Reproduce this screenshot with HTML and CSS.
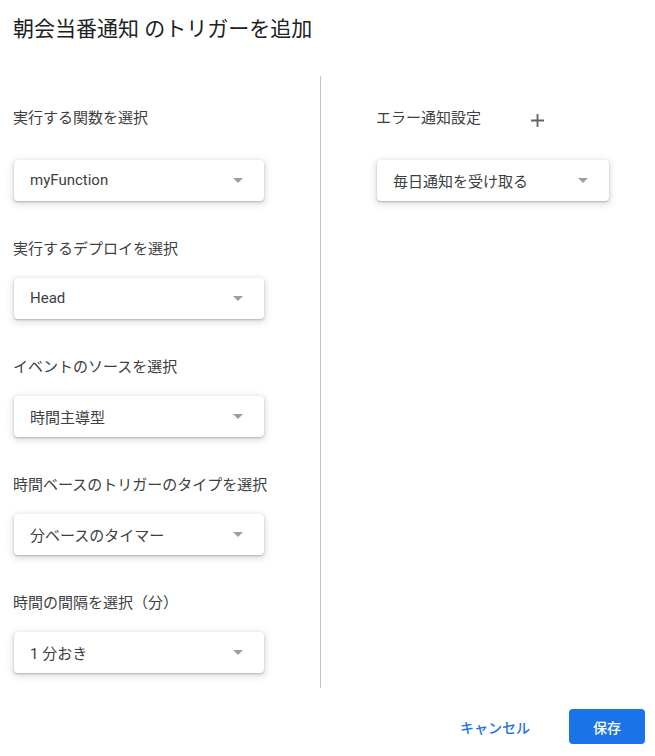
FILE: index.html
```
<!DOCTYPE html>
<html lang="ja">
<head>
<meta charset="utf-8">
<title>トリガーを追加</title>
<link rel="stylesheet" href="styles.css">
</head>
<body>
<div class="dialog">
  <h1 class="title">朝会当番通知 のトリガーを追加</h1>
  <div class="columns">
    <div class="col col-left">
      <div class="field field-first">
        <div class="label">実行する関数を選択</div>
        <div class="select"><span>myFunction</span><i class="arrow"></i></div>
      </div>
      <div class="field">
        <div class="label">実行するデプロイを選択</div>
        <div class="select"><span>Head</span><i class="arrow"></i></div>
      </div>
      <div class="field">
        <div class="label">イベントのソースを選択</div>
        <div class="select"><span>時間主導型</span><i class="arrow"></i></div>
      </div>
      <div class="field">
        <div class="label">時間ベースのトリガーのタイプを選択</div>
        <div class="select"><span>分ベースのタイマー</span><i class="arrow"></i></div>
      </div>
      <div class="field">
        <div class="label">時間の間隔を選択（分）</div>
        <div class="select"><span>1 分おき</span><i class="arrow"></i></div>
      </div>
    </div>
    <div class="col col-right">
      <div class="field field-first">
        <div class="label-row">
          <div class="label">エラー通知設定</div>
          <svg class="plus" width="13" height="13" viewBox="0 0 13 13"><path d="M6.5 0V13M0 6.5H13" stroke="#5f6368" stroke-width="1.8" fill="none"/></svg>
        </div>
        <div class="select select-narrow"><span>毎日通知を受け取る</span><i class="arrow"></i></div>
      </div>
    </div>
  </div>
  <div class="footer">
    <button class="btn btn-text">キャンセル</button>
    <button class="btn btn-primary">保存</button>
  </div>
</div>
</body>
</html>
```
FILE: styles.css
```
html, body {
  margin: 0;
  padding: 0;
  background: #ffffff;
}
body {
  font-family: Roboto, "Noto Sans CJK JP", sans-serif;
  color: #3c4043;
  width: 655px;
  height: 756px;
  overflow: hidden;
}
.dialog {
  display: flex;
  flex-direction: column;
}
.title {
  margin: 0;
  padding: 15px 0 0 13px;
  font-size: 21px;
  line-height: 28px;
  font-weight: 400;
  color: #202124;
}
.columns {
  display: flex;
  margin-top: 33px;
}
.col {
  display: flex;
  flex-direction: column;
}
.col-left {
  width: 307px;
  padding: 0 0 15px 13px;
  border-right: 1px solid #c2c4c8;
}
.col-right {
  padding-left: 55px;
}
.field {
  display: flex;
  flex-direction: column;
  margin-top: 38px;
}
.field-first {
  margin-top: 32px;
}
.label {
  font-size: 15px;
  line-height: 20px;
  color: #3c4043;
}
.label-row {
  display: flex;
  align-items: flex-start;
  height: 20px;
}
.plus {
  margin-left: 50px;
  margin-top: 6px;
}
.select {
  margin-top: 19px;
  margin-left: 1px;
  width: 250px;
  height: 41px;
  box-sizing: border-box;
  background: #fff;
  border-radius: 4px;
  box-shadow: 0 1px 2px 0 rgba(60,64,67,.3), 0 2px 6px 2px rgba(60,64,67,.15);
  display: flex;
  align-items: center;
  justify-content: space-between;
  padding: 0 21px 1px 16px;
  font-size: 15px;
  color: #3c4043;
}
.field-first .select {
  margin-top: 32px;
}
.select-narrow {
  width: 232px;
}
.arrow {
  width: 0;
  height: 0;
  border-left: 5px solid transparent;
  border-right: 5px solid transparent;
  border-top: 5px solid #9e9e9e;
  margin-top: 1px;
}
.footer {
  display: flex;
  justify-content: flex-end;
  align-items: center;
  margin-top: 21px;
  padding-right: 10px;
  gap: 15px;
}
.btn {
  font-family: Roboto, "Noto Sans CJK JP", sans-serif;
  font-size: 14px;
  font-weight: 500;
  border: none;
  border-radius: 4px;
  height: 35px;
  padding: 0 24px;
  cursor: pointer;
}
.btn-text {
  background: transparent;
  color: #1a73e8;
}
.btn-primary {
  background: #1a73e8;
  color: #fff;
  width: 76px;
}
```
